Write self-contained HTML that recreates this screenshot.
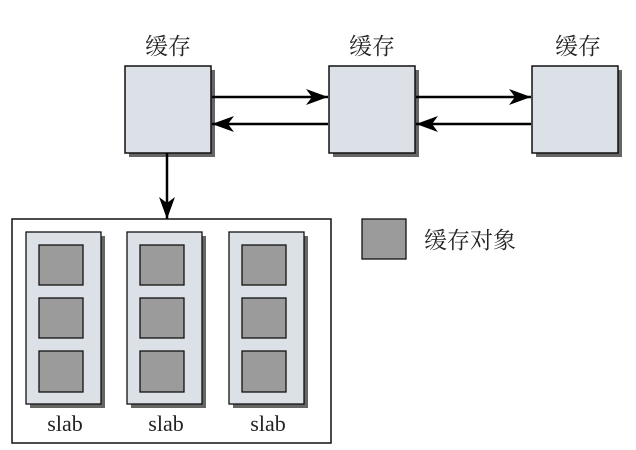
<!DOCTYPE html>
<html><head><meta charset="utf-8"><style>
html,body{margin:0;padding:0;background:#fff;width:636px;height:450px;overflow:hidden}
text{font-family:"Liberation Serif","Noto Serif CJK SC",serif;fill:#222}
</style></head><body>
<svg width="636" height="450" xmlns="http://www.w3.org/2000/svg">
<defs>
<marker id="ah" viewBox="0 0 22 16" refX="22" refY="8" markerWidth="22" markerHeight="16" markerUnits="userSpaceOnUse" orient="auto">
<path d="M0,0 L22,8 L0,16 L6,8 Z" fill="#000"/>
</marker>
</defs>
<g font-size="23">
<text x="168" y="54" text-anchor="middle">缓存</text>
<text x="372" y="54" text-anchor="middle">缓存</text>
<text x="578" y="54" text-anchor="middle">缓存</text>
</g>
<g>
<rect x="129" y="70" width="86" height="87" fill="#666"/>
<rect x="125" y="66" width="86" height="87" fill="#dce1e7" stroke="#111" stroke-width="1.5"/>
<rect x="333" y="70" width="86" height="87" fill="#666"/>
<rect x="329" y="66" width="86" height="87" fill="#dce1e7" stroke="#111" stroke-width="1.5"/>
<rect x="536" y="70" width="86" height="87" fill="#666"/>
<rect x="532" y="66" width="86" height="87" fill="#dce1e7" stroke="#111" stroke-width="1.5"/>
</g>
<g stroke="#000" stroke-width="2.5">
<line x1="212" y1="97" x2="328" y2="97" marker-end="url(#ah)"/>
<line x1="328" y1="124" x2="212" y2="124" marker-end="url(#ah)"/>
<line x1="416" y1="97" x2="531" y2="97" marker-end="url(#ah)"/>
<line x1="531" y1="124" x2="416" y2="124" marker-end="url(#ah)"/>
<line x1="167" y1="153" x2="167" y2="219" marker-end="url(#ah)"/>
</g>
<rect x="12" y="219" width="319" height="224" fill="none" stroke="#111" stroke-width="1.5"/>
<g>
<rect x="30" y="236" width="75" height="172" fill="#666"/>
<rect x="26" y="232" width="75" height="172" fill="#dce1e7" stroke="#111" stroke-width="1.3"/>
<rect x="39" y="245" width="44" height="40" fill="#9b9b9b" stroke="#111" stroke-width="1.3"/>
<rect x="39" y="298" width="44" height="40" fill="#9b9b9b" stroke="#111" stroke-width="1.3"/>
<rect x="39" y="351" width="44" height="41" fill="#9b9b9b" stroke="#111" stroke-width="1.3"/>
<rect x="131" y="236" width="75" height="172" fill="#666"/>
<rect x="127" y="232" width="75" height="172" fill="#dce1e7" stroke="#111" stroke-width="1.3"/>
<rect x="140" y="245" width="44" height="40" fill="#9b9b9b" stroke="#111" stroke-width="1.3"/>
<rect x="140" y="298" width="44" height="40" fill="#9b9b9b" stroke="#111" stroke-width="1.3"/>
<rect x="140" y="351" width="44" height="41" fill="#9b9b9b" stroke="#111" stroke-width="1.3"/>
<rect x="233" y="236" width="75" height="172" fill="#666"/>
<rect x="229" y="232" width="75" height="172" fill="#dce1e7" stroke="#111" stroke-width="1.3"/>
<rect x="242" y="245" width="44" height="40" fill="#9b9b9b" stroke="#111" stroke-width="1.3"/>
<rect x="242" y="298" width="44" height="40" fill="#9b9b9b" stroke="#111" stroke-width="1.3"/>
<rect x="242" y="351" width="44" height="41" fill="#9b9b9b" stroke="#111" stroke-width="1.3"/>
</g>
<g font-size="22">
<text x="65" y="431" text-anchor="middle">slab</text>
<text x="166" y="431" text-anchor="middle">slab</text>
<text x="268" y="431" text-anchor="middle">slab</text>
</g>
<rect x="362" y="219" width="44" height="40" fill="#9b9b9b" stroke="#111" stroke-width="1.3"/>
<text x="424" y="248" font-size="23">缓存对象</text>
</svg>
</body></html>
